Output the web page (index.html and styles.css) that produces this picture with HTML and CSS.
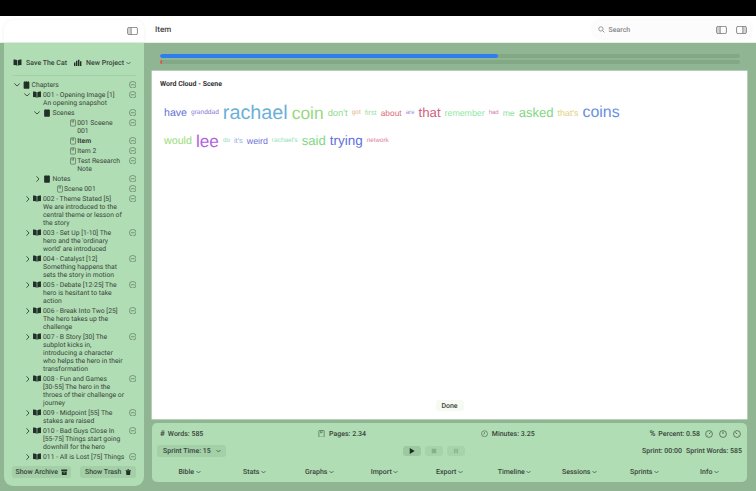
FILE: index.html
```html
<!DOCTYPE html>
<html lang="en">
<head>
<meta charset="utf-8">
<title>Item</title>
<link rel="stylesheet" href="styles.css">
</head>
<body>
<svg class="defs" width="0" height="0" aria-hidden="true">
  <symbol id="book" viewBox="0 0 16 13"><path d="M7.4 2.2C6 .9 3.6.5.6.8v10.6c3-.3 5.400 0 6.800 1.200zM8.600 2.200C10 .9 12.400.5 15.400.8v10.600c-3-.3-5.400 0-6.800 1.200z" fill="currentColor"/></symbol>
  <symbol id="notebook" viewBox="0 0 12 14"><rect x="1" y="1.500" width="10" height="12" rx="1.200" fill="currentColor"/><path d="M3 0v3M6 0v3M9 0v3" stroke="currentColor" stroke-width="1"/></symbol>
  <symbol id="doc" viewBox="0 0 12 14"><rect x="1" y=".7" width="10" height="12.600" rx="1.500" fill="none" stroke="currentColor" stroke-width="1"/><path d="M4 .7v5l1.500-1 1.500 1v-5" fill="none" stroke="currentColor" stroke-width=".9"/></symbol>
  <symbol id="minus" viewBox="0 0 14 14"><circle cx="7" cy="7" r="6.200" fill="none" stroke="currentColor" stroke-width="1"/><path d="M3.500 7h7" stroke="currentColor" stroke-width="1.100"/></symbol>
  <symbol id="chev-r" viewBox="0 0 10 8"><path d="M4.500 1.300L7 4 4.500 6.700" fill="none" stroke="currentColor" stroke-width=".9"/></symbol>
  <symbol id="chev-d" viewBox="0 0 10 8"><path d="M2.300 2.500L5 5l2.700-2.500" fill="none" stroke="currentColor" stroke-width=".9"/></symbol>
  <symbol id="caret" viewBox="0 0 10 8"><path d="M1 2l4 4 4-4" fill="none" stroke="currentColor" stroke-width="1.400"/></symbol>
  <symbol id="panel-l" viewBox="0 0 16 12"><rect x=".6" y=".6" width="14.800" height="10.800" rx="2.200" fill="none" stroke="currentColor" stroke-width="1"/><path d="M6 .6v10.800" stroke="currentColor"/><rect x="1.500" y="1.500" width="4" height="9" rx="1" fill="currentColor" opacity=".25"/></symbol>
  <symbol id="panel-r" viewBox="0 0 16 12"><rect x=".6" y=".6" width="14.800" height="10.800" rx="2.200" fill="none" stroke="currentColor" stroke-width="1"/><path d="M10 .6v10.800" stroke="currentColor"/><rect x="10.500" y="1.500" width="4" height="9" rx="1" fill="currentColor" opacity=".25"/></symbol>
  <symbol id="clock" viewBox="0 0 14 14"><circle cx="7" cy="7" r="6" fill="none" stroke="currentColor" stroke-width="1"/><path d="M7 3.500V7l-2.500 1.500" fill="none" stroke="currentColor" stroke-width="1"/></symbol>
  <symbol id="dial-a" viewBox="0 0 14 14"><circle cx="7" cy="7" r="6" fill="none" stroke="currentColor" stroke-width="1.100"/><path d="M7 7l2.800-3" stroke="currentColor" stroke-width="1.300"/><path d="M4 9.500h.8" stroke="currentColor"/></symbol>
  <symbol id="dial-b" viewBox="0 0 14 14"><circle cx="7" cy="7" r="6" fill="none" stroke="currentColor" stroke-width="1.100"/><path d="M7 7V3" stroke="currentColor" stroke-width="1.300"/></symbol>
  <symbol id="dial-c" viewBox="0 0 14 14"><circle cx="7" cy="7" r="6" fill="none" stroke="currentColor" stroke-width="1.100"/><path d="M7 7L4.200 4" stroke="currentColor" stroke-width="1.300"/><path d="M9.500 9.500h.8" stroke="currentColor"/></symbol>
</svg>

<div class="notch"></div>
<div class="window">
  <header class="topbar">
    <div class="side-head">
      <svg class="i-panel"><use href="#panel-l"/></svg>
    </div>
    <div class="toolbar">
      <h1 class="title">Item</h1>
      <div class="search">
        <svg class="i-search" viewBox="0 0 12 12"><circle cx="5" cy="5" r="3.700" fill="none" stroke="currentColor" stroke-width="1.200"/><path d="M8 8l3 3" stroke="currentColor" stroke-width="1.300"/></svg>
        <span class="search-text">Search</span>
        <svg class="i-panel first"><use href="#panel-l"/></svg>
        <svg class="i-panel"><use href="#panel-r"/></svg>
      </div>
    </div>
  </header>

  <div class="body">
    <aside class="sidebar">
      <div class="projects">
        <span class="proj"><svg class="i-book"><use href="#book"/></svg>Save The Cat</span>
        <span class="proj"><svg class="i-chart" viewBox="0 0 14 12"><path d="M0 12V6h2.500v6zM3.500 12V3H6v9zM7 12V1h2.500v11zM10.500 12V4H13v8z" fill="currentColor"/></svg>New Project<svg class="i-caret"><use href="#caret"/></svg></span>
      </div>
      <div class="tree">
        <div class="row l0"><svg class="chev"><use href="#chev-d"/></svg><svg class="i-note"><use href="#notebook"/></svg><span class="lbl">Chapters</span><svg class="i-minus"><use href="#minus"/></svg></div>
        <div class="row l1"><svg class="chev"><use href="#chev-d"/></svg><svg class="i-bk"><use href="#book"/></svg><span class="lbl">001 - Opening Image [1]<br>An opening snapshot</span><svg class="i-minus"><use href="#minus"/></svg></div>
        <div class="row l2"><svg class="chev"><use href="#chev-d"/></svg><svg class="i-note wide"><use href="#notebook"/></svg><span class="lbl">Scenes</span><svg class="i-minus"><use href="#minus"/></svg></div>
        <div class="row l3"><svg class="i-doc"><use href="#doc"/></svg><span class="lbl">001 Sceene<br>001</span><svg class="i-minus"><use href="#minus"/></svg></div>
        <div class="row l3"><svg class="i-doc"><use href="#doc"/></svg><span class="lbl strong">Item</span><svg class="i-minus"><use href="#minus"/></svg></div>
        <div class="row l3"><svg class="i-doc"><use href="#doc"/></svg><span class="lbl">Item 2</span><svg class="i-minus"><use href="#minus"/></svg></div>
        <div class="row l3"><svg class="i-doc"><use href="#doc"/></svg><span class="lbl">Test Research<br>Note</span><svg class="i-minus"><use href="#minus"/></svg></div>
        <div class="row l2"><svg class="chev"><use href="#chev-r"/></svg><svg class="i-note wide"><use href="#notebook"/></svg><span class="lbl">Notes</span><svg class="i-minus"><use href="#minus"/></svg></div>
        <div class="row l4"><svg class="i-doc"><use href="#doc"/></svg><span class="lbl">Scene 001</span><svg class="i-minus"><use href="#minus"/></svg></div>
        <div class="row l1"><svg class="chev"><use href="#chev-r"/></svg><svg class="i-bk"><use href="#book"/></svg><span class="lbl">002 - Theme Stated [5]<br>We are introduced to the<br>central theme or lesson of<br>the story</span><svg class="i-minus"><use href="#minus"/></svg></div>
        <div class="row l1"><svg class="chev"><use href="#chev-r"/></svg><svg class="i-bk"><use href="#book"/></svg><span class="lbl">003 - Set Up [1-10] The<br>hero and the 'ordinary<br>world' are introduced</span><svg class="i-minus"><use href="#minus"/></svg></div>
        <div class="row l1"><svg class="chev"><use href="#chev-r"/></svg><svg class="i-bk"><use href="#book"/></svg><span class="lbl">004 - Catalyst [12]<br>Something happens that<br>sets the story in motion</span><svg class="i-minus"><use href="#minus"/></svg></div>
        <div class="row l1"><svg class="chev"><use href="#chev-r"/></svg><svg class="i-bk"><use href="#book"/></svg><span class="lbl">005 - Debate [12-25] The<br>hero is hesitant to take<br>action</span><svg class="i-minus"><use href="#minus"/></svg></div>
        <div class="row l1"><svg class="chev"><use href="#chev-r"/></svg><svg class="i-bk"><use href="#book"/></svg><span class="lbl">006 - Break Into Two [25]<br>The hero takes up the<br>challenge</span><svg class="i-minus"><use href="#minus"/></svg></div>
        <div class="row l1"><svg class="chev"><use href="#chev-r"/></svg><svg class="i-bk"><use href="#book"/></svg><span class="lbl">007 - B Story [30] The<br>subplot kicks in,<br>introducing a character<br>who helps the hero in their<br>transformation</span><svg class="i-minus"><use href="#minus"/></svg></div>
        <div class="row l1"><svg class="chev"><use href="#chev-r"/></svg><svg class="i-bk"><use href="#book"/></svg><span class="lbl">008 - Fun and Games<br>[30-55] The hero in the<br>throes of their challenge or<br>journey</span><svg class="i-minus"><use href="#minus"/></svg></div>
        <div class="row l1"><svg class="chev"><use href="#chev-r"/></svg><svg class="i-bk"><use href="#book"/></svg><span class="lbl">009 - Midpoint [55] The<br>stakes are raised</span><svg class="i-minus"><use href="#minus"/></svg></div>
        <div class="row l1"><svg class="chev"><use href="#chev-r"/></svg><svg class="i-bk"><use href="#book"/></svg><span class="lbl">010 - Bad Guys Close In<br>[55-75] Things start going<br>downhill for the hero</span><svg class="i-minus"><use href="#minus"/></svg></div>
        <div class="row l1 last"><svg class="chev"><use href="#chev-r"/></svg><svg class="i-bk"><use href="#book"/></svg><span class="lbl">011 - All is Lost [75] Things</span><svg class="i-minus"><use href="#minus"/></svg></div>
      </div>
      <div class="side-foot">
        <button class="foot-btn archive">Show Archive<svg class="i-foot" viewBox="0 0 12 12"><path d="M.500 1h11v3H.500zM1.500 5h9v6h-9z" fill="currentColor"/><path d="M4.500 7h3" stroke="#b0ddb3" stroke-width="1"/></svg></button>
        <button class="foot-btn trash">Show Trash<svg class="i-foot" viewBox="0 0 12 12"><path d="M1 2h10v1H1zM4.500.500h3V2h-3zM2 3.500h8l-.6 8H2.600z" fill="currentColor"/></svg></button>
      </div>
    </aside>

    <main class="main">
      <div class="progress">
        <div class="track"><div class="fill-blue" style="width:58.300%"></div></div>
        <div class="track"><div class="fill-red" style="width:0.350%"></div></div>
      </div>
      <section class="card">
        <h2 class="card-title">Word Cloud - Scene</h2>
        <div class="cloud">
          <span style="font-size:10.600px;color:#6272d8">have</span>
          <span style="font-size:6.600px;color:#8a7ad8">granddad</span>
          <span style="font-size:19.800px;color:#6cb0d8">rachael</span>
          <span style="font-size:17.400px;color:#98d880">coin</span>
          <span style="font-size:9.400px;color:#90dc90">don't</span>
          <span style="font-size:6.500px;color:#e0b088">got</span>
          <span style="font-size:7.400px;color:#a0e0a8">first</span>
          <span style="font-size:8.400px;color:#d87078">about</span>
          <span style="font-size:6.200px;color:#a090e0">are</span>
          <span style="font-size:13.200px;color:#d06080">that</span>
          <span style="font-size:8.800px;color:#90e8a0">remember</span>
          <span style="font-size:6px;color:#d080b0">had</span>
          <span style="font-size:8.600px;color:#90e0a0">me</span>
          <span style="font-size:13.100px;color:#80d880">asked</span>
          <span style="font-size:8.900px;color:#e0d080">that's</span>
          <span style="font-size:15.900px;color:#6890e0">coins</span>
          <span style="font-size:10.700px;color:#98dc78">would</span>
          <span style="font-size:17.200px;color:#b060e0">lee</span>
          <span style="font-size:6.300px;color:#90e0c0">do</span>
          <span style="font-size:7.500px;color:#90b0e0">it's</span>
          <span style="font-size:8.800px;color:#7070d8">weird</span>
          <span style="font-size:6.500px;color:#90e0b0">rachael's</span>
          <span style="font-size:13.100px;color:#80d880">said</span>
          <span style="font-size:13.500px;color:#6070e0">trying</span>
          <span style="font-size:6.300px;color:#e080a0">network</span>
        </div>
        <button class="done">Done</button>
      </section>

      <section class="stats">
        <div class="stat-row">
          <span class="stat"><b class="sym">#</b>Words: 585</span>
          <span class="stat"><svg class="i-stat"><use href="#doc"/></svg>Pages: 2.34</span>
          <span class="stat"><svg class="i-stat"><use href="#clock"/></svg>Minutes: 3.25</span>
          <span class="stat"><b class="sym">%</b>Percent: 0.58<svg class="i-dial lead"><use href="#dial-a"/></svg><svg class="i-dial"><use href="#dial-b"/></svg><svg class="i-dial"><use href="#dial-c"/></svg></span>
        </div>
        <div class="sprint-row">
          <div class="select"><span>Sprint Time: 15</span><svg class="i-caret"><use href="#caret"/></svg></div>
          <div class="transport">
            <button class="tbtn on"><svg viewBox="0 0 8 8"><path d="M1 0l6.500 4L1 8z" fill="currentColor"/></svg></button>
            <button class="tbtn"><svg viewBox="0 0 8 8"><rect x="1" y="1" width="6" height="6" fill="currentColor"/></svg></button>
            <button class="tbtn"><svg viewBox="0 0 8 8"><path d="M1.500 1h1.800v6H1.500zM4.700 1h1.800v6H4.700z" fill="currentColor"/></svg></button>
          </div>
          <div class="sprint-info"><span>Sprint: 00:00</span><span>Sprint Words: 585</span></div>
        </div>
        <nav class="menus">
          <span>Bible<svg class="i-caret"><use href="#caret"/></svg></span>
          <span>Stats<svg class="i-caret"><use href="#caret"/></svg></span>
          <span>Graphs<svg class="i-caret"><use href="#caret"/></svg></span>
          <span>Import<svg class="i-caret"><use href="#caret"/></svg></span>
          <span>Export<svg class="i-caret"><use href="#caret"/></svg></span>
          <span>Timeline<svg class="i-caret"><use href="#caret"/></svg></span>
          <span>Sessions<svg class="i-caret"><use href="#caret"/></svg></span>
          <span>Sprints<svg class="i-caret"><use href="#caret"/></svg></span>
          <span>Info<svg class="i-caret"><use href="#caret"/></svg></span>
        </nav>
      </section>
    </main>
  </div>
</div>
</body>
</html>
```
FILE: styles.css
```css
* { box-sizing: border-box; }
html, body { margin: 0; height: 100%; overflow: hidden; }
body {
  background: #000;
  font-family: Roboto, "Liberation Sans", sans-serif;
  font-size: 7px;
  color: #3a443c;
  text-rendering: geometricPrecision;
}
.defs { position: absolute; }
svg { display: block; flex: none; }
button { font: inherit; color: inherit; border: 0; padding: 0; text-rendering: inherit; }

.notch { height: 16px; background: #000; }
.window { height: 475px; display: flex; flex-direction: column; background: #8fb592; }

.topbar { height: 27px; flex: none; display: flex; background: #fff; border-bottom: 1px solid #e6efe6; padding-left: 4px; }
.side-head {
  width: 140px; margin-top: 4px; border-radius: 9px 9px 0 0;
  background: #fff; box-shadow: 0 0 4px rgba(0,0,0,.06);
  display: flex; align-items: center; justify-content: flex-end; padding: 0 6px 1px 0;
}
.i-panel { width: 11px; height: 8px; color: #555; }
.toolbar { flex: 1; display: flex; align-items: center; padding: 0 4px 0 11px; }
.title { margin: 0; font-size: 8px; font-weight: 500; color: #444; }
.search {
  margin-left: auto; width: 160px; height: 19px; margin-top: 1px; border-radius: 10px;
  background: #fcfcfc; display: flex; align-items: center; padding: 0 5.500px 0 6px;
  box-shadow: 0 0 3px rgba(0,0,0,.05);
}
.i-search { width: 7px; height: 7px; color: #777; margin-right: 3.500px; }
.search-text { color: #888; font-size: 7px; font-weight: 500; }
.search .first { margin-left: auto; margin-right: 9px; }

.body { flex: 1; min-height: 0; display: flex; gap: 8px; padding: 0 9px 5px 4px; }

.sidebar {
  width: 140px; flex: none; display: flex; flex-direction: column;
  background: #b0ddb3; border-radius: 0 0 9px 9px; padding: 0 8px 8px;
}
.projects {
  height: 33px; flex: none; display: flex; justify-content: space-between; align-items: center;
  padding: 7px 5px 0 1px; border-bottom: 1px solid #a2cfa6;
  margin-bottom: 3.500px; font-weight: 500;
}
.proj { display: flex; align-items: center; gap: 4px; white-space: nowrap; }
.i-book { width: 9px; height: 7px; color: #22302a; }
.i-chart { width: 8px; height: 7px; color: #22302a; }
.i-caret { width: 5px; height: 4px; color: #3a443c; margin-left: 2px; }
.proj .i-caret { margin-left: -2px; }

.tree { flex: 1; min-height: 0; overflow: hidden; font-size: 6.800px; }
.row { display: flex; align-items: flex-start; padding: 1px 0; line-height: 8px; }
.l1 { padding-left: 10px; }
.l2 { padding-left: 20px; }
.l3 { padding-left: 57.700px; }
.l4 { padding-left: 44.500px; }
.chev { width: 10px; height: 8px; color: #3a443c; }
.i-note { width: 9px; height: 8px; color: #22302a; }
.i-note.wide { width: 10px; }
.i-bk { width: 10px; height: 7px; margin: .5px .5px 0 0; color: #22302a; }
.i-doc { width: 6px; height: 8px; margin-right: 1px; color: #3a443c; }
.lbl { flex: 1; margin-left: .5px; white-space: nowrap; }
.strong { font-weight: 700; }
.i-minus { width: 7.500px; height: 7.500px; margin: .25px 0 0 auto; color: #4a5c4d; }

.side-foot { flex: none; display: flex; justify-content: space-between; padding: 4px 0 0; margin-top: 1px; }
.foot-btn {
  height: 12px; border-radius: 3px; background: #a3d0a7; display: flex; align-items: center;
  justify-content: center; gap: 3px; font-weight: 500; white-space: nowrap;
}
.archive { width: 59px; }
.trash { width: 56px; }
.i-foot { width: 6.500px; height: 6.500px; color: #22302a; }

.main { flex: 1; min-width: 0; display: flex; flex-direction: column; padding-bottom: 4px; }
.progress { flex: none; padding: 11px 7px 7px 8px; display: flex; flex-direction: column; gap: 2px; }
.track { height: 4px; border-radius: 2px; background: #82a886; overflow: hidden; }
.fill-blue { height: 100%; background: #2f7ef0; border-radius: 2px; }
.fill-red { height: 100%; background: #e8504a; }

.card {
  flex: 1; min-height: 0; background: #fff; display: flex; flex-direction: column;
  padding: 9px 8px 8px; box-shadow: 0 0 0 .5px #dde8dd;
}
.card-title { margin: 0; font-size: 7px; font-weight: 700; line-height: 8px; color: #333; }
.cloud {
  flex: 1; width: 466px; margin: 11px 0 0 4px; display: flex; flex-wrap: wrap; gap: 0 4px;
  align-content: flex-start; align-items: center;
  font-family: "Liberation Sans", sans-serif;
}
.cloud span { line-height: 28px; height: 28px; }
.done {
  align-self: center; width: 28px; height: 11px; background: #f6faf3; border-radius: 3px;
  font-weight: 500;
}

.stats {
  flex: none; height: 59px; margin-top: 4px; background: #b0ddb3;
  border-radius: 5px; padding: 5px 5px 0; display: flex; flex-direction: column;
}
.stat-row { height: 11px; display: flex; justify-content: space-between; align-items: center; padding: 0 1px 0 3px; font-weight: 500; }
.stat { display: flex; align-items: center; }
.sym { font-weight: 500; font-size: 8px; margin-right: 3px; }
.i-stat { width: 7px; height: 7.500px; margin-right: 4px; color: #3a443c; }
.i-dial { width: 8px; height: 8px; margin-left: 6px; color: #3a443c; }
.i-dial.lead { margin-left: 5px; }

.sprint-row { margin-top: 6px; height: 12px; display: flex; justify-content: space-between; align-items: center; font-weight: 500; }
.select {
  width: 69px; height: 12px; border-radius: 3px; background: #a3d0a7;
  display: flex; align-items: center; justify-content: space-between; padding: 0 5px 0 6px;
}
.transport { display: flex; gap: 4px; }
.tbtn { width: 18px; height: 10px; border-radius: 3px; background: #a7d3ab; color: #85b089; display: flex; align-items: center; justify-content: center; }
.tbtn svg { width: 6px; height: 6px; }
.tbtn.on { color: #1c2a20; background: #9dc9a1; }
.sprint-info { display: flex; gap: 4px; }

.menus { margin-top: 9.500px; display: grid; grid-template-columns: repeat(9, 1fr); font-weight: 500; }
.menus span { display: flex; align-items: center; justify-content: center; line-height: 10px; }
.menus .i-caret { margin-left: 1.500px; }
```
